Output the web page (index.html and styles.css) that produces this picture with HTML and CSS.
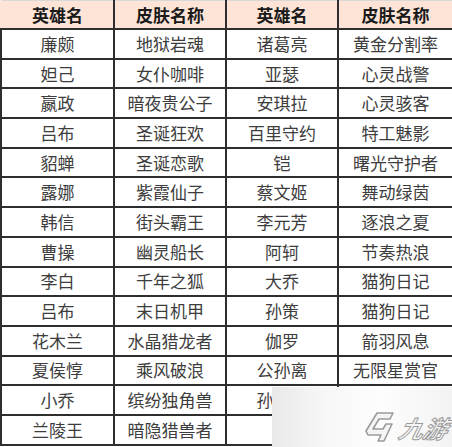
FILE: index.html
```html
<!DOCTYPE html>
<html lang="zh">
<head>
<meta charset="utf-8">
<link rel="stylesheet" href="styles.css">
</head>
<body>
<div class="page">
<table class="skins">
<colgroup><col class="c1"><col class="c2"><col class="c3"><col class="c4"></colgroup>
<thead>
<tr><th>英雄名</th><th>皮肤名称</th><th>英雄名</th><th>皮肤名称</th></tr>
</thead>
<tbody>
<tr><td>廉颇</td><td>地狱岩魂</td><td>诸葛亮</td><td>黄金分割率</td></tr>
<tr><td>妲己</td><td>女仆咖啡</td><td>亚瑟</td><td>心灵战警</td></tr>
<tr><td>嬴政</td><td>暗夜贵公子</td><td>安琪拉</td><td>心灵骇客</td></tr>
<tr><td>吕布</td><td>圣诞狂欢</td><td>百里守约</td><td>特工魅影</td></tr>
<tr><td>貂蝉</td><td>圣诞恋歌</td><td>铠</td><td>曙光守护者</td></tr>
<tr><td>露娜</td><td>紫霞仙子</td><td>蔡文姬</td><td>舞动绿茵</td></tr>
<tr><td>韩信</td><td>街头霸王</td><td>李元芳</td><td>逐浪之夏</td></tr>
<tr><td>曹操</td><td>幽灵船长</td><td>阿轲</td><td>节奏热浪</td></tr>
<tr><td>李白</td><td>千年之狐</td><td>大乔</td><td>猫狗日记</td></tr>
<tr><td>吕布</td><td>末日机甲</td><td>孙策</td><td>猫狗日记</td></tr>
<tr><td>花木兰</td><td>水晶猎龙者</td><td>伽罗</td><td>箭羽风息</td></tr>
<tr><td>夏侯惇</td><td>乘风破浪</td><td>公孙离</td><td>无限星赏官</td></tr>
<tr><td>小乔</td><td>缤纷独角兽</td><td>孙尚香</td><td></td></tr>
<tr><td>兰陵王</td><td>暗隐猎兽者</td><td></td><td></td></tr>
</tbody>
</table>
<div class="watermark">
<svg class="wm-logo" width="34" height="32" viewBox="0 0 34 32">
<path d="M14 2 H30 L27 8 H16 L10 18 H20 L23 13 H29 L21 30 H15 L18 24 H5 L3 20 Z" fill="#f4f4f4" stroke="#9a9a9a" stroke-width="1.6" stroke-linejoin="round"/>
</svg>
<span class="wm-text">九游</span>
</div>
</div>
</body>
</html>
```
FILE: styles.css
```css
html, body {
  margin: 0;
  padding: 0;
  background: #ffffff;
}
.page {
  position: relative;
  width: 452px;
  height: 447px;
  overflow: hidden;
}
.skins {
  border-collapse: collapse;
  table-layout: fixed;
  width: 452px;
  font-family: "Noto Sans CJK SC", "Microsoft YaHei", sans-serif;
  font-size: 17px;
}
.c1 { width: 113px; }
.c2 { width: 112px; }
.c3 { width: 112px; }
.c4 { width: 115px; }
.skins th, .skins td {
  border: 2px solid #2e2e2e;
  text-align: center;
  padding: 0;
  height: 27.7px;
  line-height: 26px;
  white-space: nowrap;
  overflow: hidden;
}
.skins th {
  background: #fde4d7;
  color: #1a1a1a;
  font-weight: 700;
  border-top: 1px solid #d8d8d8;
  height: 27px;
}
.skins thead tr th:first-child { border-left: 2px solid #fde4d7; }
.skins td {
  color: #3d3d3d;
  font-weight: 400;
}
.watermark {
  position: absolute;
  left: 272px;
  top: 387px;
  width: 180px;
  height: 60px;
  background: linear-gradient(90deg, #e9e9e9 0%, #f7f7f7 30%, #fdfdfd 60%, #f3f3f3 100%);
  display: flex;
  align-items: center;
  justify-content: flex-end;
  gap: 3px;
  padding-right: 4px;
  box-sizing: border-box;
}
.wm-logo {
  margin-top: 20px;
}
.wm-text {
  margin-top: 22px;
  font-family: "Noto Sans CJK SC", sans-serif;
  font-size: 24px;
  font-style: italic;
  font-weight: 700;
  color: #f4f4f4;
  -webkit-text-stroke: 1px #9a9a9a;
  transform: skewX(-14deg);
  letter-spacing: 0;
  line-height: 30px;
}
```
